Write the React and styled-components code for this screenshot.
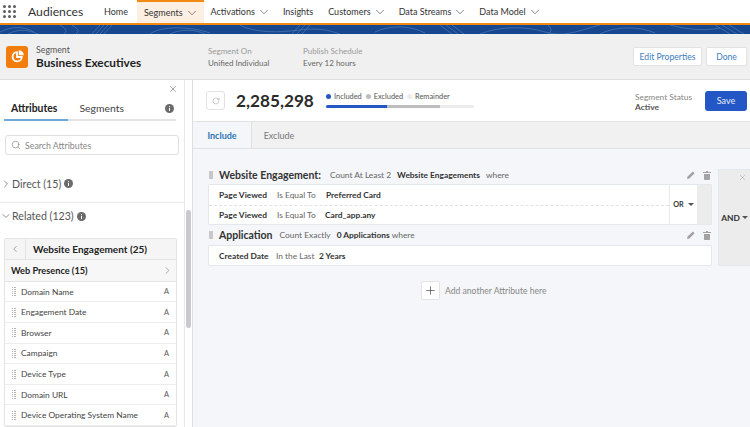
import React from 'react';
import styled, { createGlobalStyle } from 'styled-components';
import { ChevronDown, ChevronRight, ChevronLeft, X, Search, RotateCw, Plus } from 'lucide-react';

const GlobalStyle = createGlobalStyle`
  html, body { margin: 0; padding: 0; }
  body { font-family: Lato, "Liberation Sans", sans-serif; color: #2b2b2b; background: #fff; }
  * { box-sizing: border-box; }
`;

const Page = styled.div`
  width: 750px;
  height: 427px;
  overflow: hidden;
  display: flex;
  flex-direction: column;
`;

const NavBar = styled.div`
  height: 25px;
  flex: none;
  display: flex;
  align-items: center;
  background: #fff;
  border-bottom: 2px solid #f08a12;
`;

const Waffle = styled.div`
  display: grid;
  grid-template-columns: repeat(3, 3px);
  gap: 2px;
  margin: 0 12px 0 3px;
`;

const Dot = styled.span`
  width: 3px;
  height: 3px;
  border-radius: 50%;
  background: #5c5c5c;
`;

const AppName = styled.div`
  font-size: 12.2px;
  width: 76px;
  color: #333;
`;

const NavItem = styled.div`
  height: 23px;
  display: flex;
  align-items: center;
  gap: 2px;
  font-size: 9px;
  color: #333;
  padding: ${p => (p.$active ? '0 5px 0 7px' : '0')};
  margin-right: ${p => p.$gap}px;
  background: ${p => (p.$active ? '#fdf0e3' : 'transparent')};
  border-top: ${p => (p.$active ? '2px solid #f08a12' : 'none')};
`;

const Banner = styled.svg`
  display: block;
  flex: none;
  width: 750px;
  height: 9px;
  background: #17488f;
`;

const PageHeader = styled.div`
  height: 46px;
  flex: none;
  display: flex;
  align-items: center;
  background: #f0f0f0;
  border-bottom: 1px solid #dedede;
  padding: 0 3px 0 6px;
`;

const SegmentIcon = styled.div`
  width: 22px;
  height: 22px;
  border-radius: 3px;
  background: #f27d0c;
  display: flex;
  align-items: center;
  justify-content: center;
  margin-right: 8px;
`;

const TitleBlock = styled.div`
  width: 172px;
`;

const TitleLabel = styled.div`
  font-size: 8.8px;
  line-height: 11px;
  color: #555;
`;

const Title = styled.div`
  font-size: 11.8px;
  line-height: 15px;
  font-weight: 700;
  color: #1f1f1f;
`;

const MetaBlock = styled.div`
  width: ${p => p.$width}px;
  font-size: 8px;
  line-height: 12px;
  color: #666;
`;

const MetaLabel = styled.div`
  color: #999;
`;

const HeaderActions = styled.div`
  margin-left: auto;
  display: flex;
  gap: 4px;
`;

const LightButton = styled.div`
  height: 19px;
  width: ${p => p.$width}px;
  background: #fff;
  border: 1px solid #e2e2e2;
  border-radius: 2px;
  font-size: 8.6px;
  color: #3b7dbf;
  display: flex;
  align-items: center;
  justify-content: center;
`;

const Body = styled.div`
  flex: 1;
  display: flex;
  min-height: 0;
`;

const Side = styled.div`
  position: relative;
  width: 193px;
  flex: none;
  background: #fff;
  border-right: 1px solid #dedede;
  overflow: hidden;
`;

const SideInner = styled.div`
  width: 185px;
  border-right: 1px solid #e8e8e8;
  height: 100%;
  display: flex;
  flex-direction: column;
`;

const CloseRow = styled.div`
  height: 18px;
  display: flex;
  align-items: center;
  justify-content: flex-end;
  padding-right: 6px;
  color: #666;
`;

const SideTabs = styled.div`
  margin: 0 8px 0 4px;
  height: 24px;
  display: flex;
  align-items: center;
  border-bottom: 2px solid #e4e4e4;
  position: relative;
  padding-left: 7px;
`;

const SideTab = styled.div`
  font-size: 10.4px;
  font-weight: ${p => (p.$active ? 700 : 400)};
  color: ${p => (p.$active ? '#222' : '#444')};
  margin-right: 22px;
`;

const ActiveBar = styled.div`
  position: absolute;
  left: 0;
  bottom: -2px;
  width: 64px;
  height: 2px;
  background: #6fa9d8;
`;

const InfoSvg = styled.svg`
  flex: none;
  margin-left: ${p => (p.$auto ? 'auto' : '3px')};
  margin-right: ${p => (p.$auto ? '2px' : '0')};
`;

const SearchBox = styled.div`
  margin: 14px 5px 0 5px;
  height: 20px;
  border: 1px solid #dedede;
  border-radius: 3px;
  display: flex;
  align-items: center;
  gap: 4px;
  padding-left: 5px;
  font-size: 8.8px;
  color: #888;
`;

const GroupRow = styled.div`
  height: ${p => p.$height}px;
  padding-top: ${p => p.$pad || 0}px;
  display: flex;
  align-items: center;
  font-size: 10.6px;
  color: #555;
  border-bottom: ${p => (p.$divider ? '1px solid #e8e8e8' : 'none')};
  flex: none;
`;

const Card = styled.div`
  margin: 9px 7px 0 4px;
  border: 1px solid #e4e4e4;
  border-radius: 2px;
  flex: none;
`;

const CardHeader = styled.div`
  height: 21px;
  background: #f5f5f5;
  border-bottom: 1px solid #e4e4e4;
  display: flex;
  align-items: center;
  font-size: 10px;
  font-weight: 700;
  color: #222;
`;

const BackCell = styled.div`
  width: 21px;
  height: 100%;
  border-right: 1px solid #e4e4e4;
  display: flex;
  align-items: center;
  justify-content: center;
  margin-right: 7px;
  color: #666;
`;

const SubHeader = styled.div`
  height: 22px;
  background: #f7f7f7;
  border-bottom: 1px solid #e4e4e4;
  display: flex;
  align-items: center;
  justify-content: space-between;
  padding: 0 3px 0 6px;
  font-size: 9.2px;
  font-weight: 700;
  color: #222;
`;

const AttrRow = styled.div`
  height: 20.6px;
  border-bottom: 1px solid #ececec;
  display: flex;
  align-items: center;
  padding: 0 7px;
  font-size: 8.4px;
  color: #444;
`;

const Grip = styled.span`
  width: 4px;
  height: 9px;
  margin-right: 5px;
  flex: none;
  background:
    linear-gradient(to right, transparent 1.5px, #fff 1.5px, #fff 2.5px, transparent 2.5px),
    repeating-linear-gradient(to bottom, #b5b5b5 0, #b5b5b5 1px, transparent 1px, transparent 2px);
`;

const RuleGrip = styled.span`
  width: 4px;
  height: 8px;
  margin-left: 1px;
  flex: none;
  background: #c8c8c8;
`;

const TypeMark = styled.span`
  margin-left: auto;
  font-size: 7.4px;
  color: #555;
`;

const ScrollThumb = styled.div`
  position: absolute;
  left: 186px;
  top: 130px;
  width: 5px;
  height: 118px;
  border-radius: 3px;
  background: #c9c9cf;
`;

const Main = styled.div`
  flex: 1;
  display: flex;
  flex-direction: column;
  background: #f4f6f9;
  min-width: 0;
`;

const StatsBar = styled.div`
  height: 42px;
  flex: none;
  background: #fff;
  border-bottom: 1px solid #e2e2e2;
  display: flex;
  align-items: center;
  padding: 0 3px 0 13px;
`;

const RefreshBox = styled.div`
  width: 19px;
  height: 19px;
  border: 1px solid #e2e2e2;
  border-radius: 3px;
  color: #999;
  display: flex;
  align-items: center;
  justify-content: center;
  margin-right: 11px;
`;

const Count = styled.div`
  font-size: 17.2px;
  font-weight: 700;
  color: #2b2b2b;
  width: 90px;
`;

const Meter = styled.div`
  width: 148px;
  margin-bottom: 2px;
`;

const Legend = styled.div`
  display: flex;
  align-items: center;
  font-size: 7.4px;
  color: #555;
  height: 9px;
  margin-bottom: 4px;
`;

const LegendDot = styled.span`
  width: 5px;
  height: 5px;
  border-radius: 50%;
  background: ${p => p.$color};
  margin-right: 3px;
`;

const LegendText = styled.span`
  margin-right: 4px;
`;

const MeterTrack = styled.div`
  height: 3px;
  border-radius: 2px;
  background: #ececec;
  display: flex;
  overflow: hidden;
`;

const MeterFill = styled.div`
  height: 100%;
  background: ${p => p.$color};
`;

const StatusBlock = styled.div`
  margin-left: auto;
  margin-right: 13px;
  padding-top: 2px;
  font-size: 8.4px;
  line-height: 10px;
  width: 57px;
  white-space: nowrap;
  color: #888;
`;

const StatusValue = styled.div`
  color: #555;
  font-weight: 700;
`;

const SaveButton = styled.div`
  width: 42px;
  height: 20px;
  background: #2257c5;
  border-radius: 3px;
  color: #e4ecfb;
  font-size: 9px;
  display: flex;
  align-items: center;
  justify-content: center;
`;

const TabStrip = styled.div`
  height: 27px;
  flex: none;
  background: #f1f1f1;
  border-bottom: 1px solid #e2e2e2;
  display: flex;
`;

const RuleTab = styled.div`
  width: ${p => p.$width}px;
  display: flex;
  align-items: center;
  justify-content: center;
  font-size: 9px;
  font-weight: ${p => (p.$active ? 700 : 400)};
  color: ${p => (p.$active ? '#2f74b5' : '#777')};
  background: ${p => (p.$active ? '#f4f6f9' : 'transparent')};
  border-right: ${p => (p.$active ? '1px solid #e0e0e0' : 'none')};
`;

const Canvas = styled.div`
  padding: 17px 0 0 15px;
  display: flex;
  gap: 6px;
  align-items: flex-start;
`;

const Rules = styled.div`
  width: 504px;
  flex: none;
  display: flex;
  flex-direction: column;
`;

const RuleHeader = styled.div`
  height: ${p => p.$height}px;
  display: flex;
  align-items: center;
  font-size: 8.4px;
  color: #666;
  gap: 6px;
`;

const RuleName = styled.span`
  font-size: 10.5px;
  font-weight: 700;
  color: #333;
  margin-right: ${p => p.$mr}px;
`;

const Strong = styled.span`
  font-weight: 700;
  color: #333;
`;

const RuleTools = styled.div`
  margin-left: auto;
  display: flex;
  gap: 8px;
  margin-right: 1px;
`;

const RuleBox = styled.div`
  border: 1px solid #e4e7ec;
  background: #fff;
  display: flex;
  border-radius: 1px;
`;

const RuleRows = styled.div`
  flex: 1;
`;

const RuleRow = styled.div`
  height: ${p => p.$height}px;
  display: flex;
  align-items: center;
  padding-left: 10px;
  font-size: 8.4px;
  color: #666;
  border-top: ${p => (p.$dashed ? '1px dashed #e2e2e2' : 'none')};
`;

const Cell = styled.span`
  width: ${p => p.$width}px;
  flex: none;
  font-weight: ${p => (p.$bold ? 700 : 400)};
  color: ${p => (p.$bold ? '#333' : '#666')};
`;

const OrCell = styled.div`
  width: 28px;
  border-left: 1px solid #e8e8e8;
  display: flex;
  align-items: center;
  justify-content: center;
  gap: 4px;
  font-size: 7.2px;
  font-weight: 700;
  color: #333;
`;

const GreyCell = styled.div`
  width: 14px;
  background: #ececec;
`;

const Caret = styled.span`
  width: 0;
  height: 0;
  border-left: 3px solid transparent;
  border-right: 3px solid transparent;
  border-top: 3px solid #555;
`;

const AndColumn = styled.div`
  position: relative;
  flex: 1;
  margin-top: 3px;
  height: 97px;
  background: #ececec;
  border: 1px solid #e4e7ec;
  border-right: none;
  display: flex;
  align-items: center;
  justify-content: center;
  gap: 2px;
  font-size: 8.4px;
  font-weight: 700;
  color: #333;
`;

const AndClose = styled(X)`
  position: absolute;
  top: 3px;
  right: 3px;
  color: #999;
`;

const AddRow = styled.div`
  margin-top: 15px;
  padding-left: 213px;
  display: flex;
  align-items: center;
  gap: 5px;
  font-size: 8.6px;
  color: #888;
`;

const AddButton = styled.div`
  width: 19px;
  height: 19px;
  background: #fff;
  border: 1px solid #e4e4e4;
  border-radius: 2px;
  color: #555;
  display: flex;
  align-items: center;
  justify-content: center;
`;

const InfoDot = ({ auto }) => (
  <InfoSvg width="9" height="9" viewBox="0 0 9 9" $auto={auto}>
    <circle cx="4.5" cy="4.5" r="4.5" fill="#6b6b6b" />
    <rect x="4" y="4" width="1" height="3" fill="#fff" />
    <rect x="4" y="2.2" width="1" height="1" fill="#fff" />
  </InfoSvg>
);

const RuleIcons = () => (
  <RuleTools>
    <svg width="8" height="8" viewBox="0 0 8 8" fill="#a3a3a3">
      <path d="M5.8.4 7.6 2.2 2.4 7.4 0 8l.6-2.4Z" />
    </svg>
    <svg width="8" height="9" viewBox="0 0 8 9" fill="#a3a3a3">
      <path d="M3 0h2v1h3v1H0V1h3ZM1 3h6v5.2a.8.8 0 0 1-.8.8H1.8a.8.8 0 0 1-.8-.8Z" />
    </svg>
  </RuleTools>
);

const navItems = [
  { label: 'Home', gap: 9 },
  { label: 'Segments', menu: true, active: true, gap: 7 },
  { label: 'Activations', menu: true, gap: 12 },
  { label: 'Insights', gap: 15 },
  { label: 'Customers', menu: true, gap: 12 },
  { label: 'Data Streams', menu: true, gap: 12 },
  { label: 'Data Model', menu: true, gap: 0 },
];

const attributes = ['Domain Name', 'Engagement Date', 'Browser', 'Campaign', 'Device Type', 'Domain URL', 'Device Operating System Name'];

const App = () => (
  <Page>
    <GlobalStyle />
    <NavBar>
      <Waffle>
        {Array.from({ length: 9 }, (_, i) => <Dot key={i} />)}
      </Waffle>
      <AppName>Audiences</AppName>
      {navItems.map(item => (
        <NavItem key={item.label} $active={item.active} $gap={item.gap}>
          {item.label}
          {item.menu && <ChevronDown size={14} strokeWidth={1} />}
        </NavItem>
      ))}
    </NavBar>
    <Banner viewBox="0 0 750 9" preserveAspectRatio="none">
      <g fill="none" stroke="#5f8cc4" strokeWidth="0.7" opacity="0.75">
        <path d="M0 7C12 1 24 1 34 7M8 9C18 4 26 4 38 9M60 0C66 4 68 6 64 9M72 0C78 4 80 6 76 9M100 0L92 9M104 0L96 9M108 0L100 9M112 0L104 9" />
        <path d="M150 9C160 1 190 1 210 8M170 9C180 4 195 4 205 9M240 0C250 6 270 8 290 6S320 2 340 9M300 0L292 9M305 0L297 9M310 0L302 9" />
        <path d="M375 7C390 0 410 0 425 8M440 0L452 9M446 0L458 9M452 0L464 9M480 9C500 1 525 1 545 7S580 5 600 0M548 0C552 4 552 6 548 9" />
        <path d="M600 9C615 1 640 1 655 8M670 0C690 5 705 6 720 3M715 0L730 9M722 0L737 9M729 0L744 9" />
      </g>
    </Banner>
    <PageHeader>
      <SegmentIcon>
        <svg width="15" height="15" viewBox="0 0 15 15" fill="none">
          <path d="M7 3.2A4.6 4.6 0 1 0 11.8 8H7Z" stroke="#fff" strokeWidth="1.8" fill="none" />
          <path d="M8.8 1.2A5 5 0 0 1 13.8 6.2H8.8Z" fill="#fff" />
        </svg>
      </SegmentIcon>
      <TitleBlock>
        <TitleLabel>Segment</TitleLabel>
        <Title>Business Executives</Title>
      </TitleBlock>
      <MetaBlock $width={95}>
        <MetaLabel>Segment On</MetaLabel>
        Unified Individual
      </MetaBlock>
      <MetaBlock $width={100}>
        <MetaLabel>Publish Schedule</MetaLabel>
        Every 12 hours
      </MetaBlock>
      <HeaderActions>
        <LightButton $width={69}>Edit Properties</LightButton>
        <LightButton $width={41}>Done</LightButton>
      </HeaderActions>
    </PageHeader>
    <Body>
      <Side>
        <SideInner>
          <CloseRow><X size={10} strokeWidth={1.4} /></CloseRow>
          <SideTabs>
            <SideTab $active>Attributes</SideTab>
            <SideTab>Segments</SideTab>
            <InfoDot auto />
            <ActiveBar />
          </SideTabs>
          <SearchBox>
            <Search size={10} strokeWidth={1.4} color="#777" />
            Search Attributes
          </SearchBox>
          <GroupRow $height={48} $pad={11} $divider>
            <ChevronRight size={12} strokeWidth={1.3} />
            Direct (15)
            <InfoDot />
          </GroupRow>
          <GroupRow $height={26} $pad={1}>
            <ChevronDown size={12} strokeWidth={1.3} />
            Related (123)
            <InfoDot />
          </GroupRow>
          <Card>
            <CardHeader>
              <BackCell><ChevronLeft size={10} strokeWidth={1.4} /></BackCell>
              Website Engagement (25)
            </CardHeader>
            <SubHeader>
              Web Presence (15)
              <ChevronRight size={11} strokeWidth={1.2} color="#666" />
            </SubHeader>
            {attributes.map(name => (
              <AttrRow key={name}>
                <Grip />
                {name}
                <TypeMark>A</TypeMark>
              </AttrRow>
            ))}
          </Card>
        </SideInner>
        <ScrollThumb />
      </Side>
      <Main>
        <StatsBar>
          <RefreshBox><RotateCw size={8} strokeWidth={1.4} /></RefreshBox>
          <Count>2,285,298</Count>
          <Meter>
            <Legend>
              <LegendDot $color="#2257c5" />
              <LegendText>Included</LegendText>
              <LegendDot $color="#bdbdbd" />
              <LegendText>Excluded</LegendText>
              <LegendDot $color="#ececec" />
              <LegendText>Remainder</LegendText>
            </Legend>
            <MeterTrack>
              <MeterFill $color="#2257c5" style={{ width: '41%' }} />
              <MeterFill $color="#bdbdbd" style={{ width: '36%' }} />
            </MeterTrack>
          </Meter>
          <StatusBlock>
            Segment Status
            <StatusValue>Active</StatusValue>
          </StatusBlock>
          <SaveButton>Save</SaveButton>
        </StatsBar>
        <TabStrip>
          <RuleTab $active $width={59}>Include</RuleTab>
          <RuleTab $width={54}>Exclude</RuleTab>
        </TabStrip>
        <Canvas>
          <Rules>
            <RuleHeader $height={18}>
              <RuleGrip />
              <RuleName $mr={3}>Website Engagement:</RuleName>
              Count At Least 2
              <Strong>Website Engagements</Strong>
              where
              <RuleIcons />
            </RuleHeader>
            <RuleBox>
              <RuleRows>
                <RuleRow $height={20}>
                  <Cell $bold $width={58}>Page Viewed</Cell>
                  <Cell $width={49}>Is Equal To</Cell>
                  <Cell $bold>Preferred Card</Cell>
                </RuleRow>
                <RuleRow $dashed $height={19}>
                  <Cell $bold $width={58}>Page Viewed</Cell>
                  <Cell $width={48}>Is Equal To</Cell>
                  <Cell $bold>Card_app.any</Cell>
                </RuleRow>
              </RuleRows>
              <OrCell>OR<Caret /></OrCell>
              <GreyCell />
            </RuleBox>
            <RuleHeader $height={20}>
              <RuleGrip />
              <RuleName $mr={1}>Application</RuleName>
              Count Exactly
              <span><Strong>0 Applications</Strong> where</span>
              <RuleIcons />
            </RuleHeader>
            <RuleBox>
              <RuleRows>
                <RuleRow $height={19}>
                  <Cell $bold $width={57}>Created Date</Cell>
                  <Cell $width={43}>In the Last</Cell>
                  <Cell $bold>2 Years</Cell>
                </RuleRow>
              </RuleRows>
            </RuleBox>
            <AddRow>
              <AddButton><Plus size={13} strokeWidth={1.4} /></AddButton>
              Add another Attribute here
            </AddRow>
          </Rules>
          <AndColumn>
            <AndClose size={9} strokeWidth={1.2} />
            AND<Caret />
          </AndColumn>
        </Canvas>
      </Main>
    </Body>
  </Page>
);

export default App;
